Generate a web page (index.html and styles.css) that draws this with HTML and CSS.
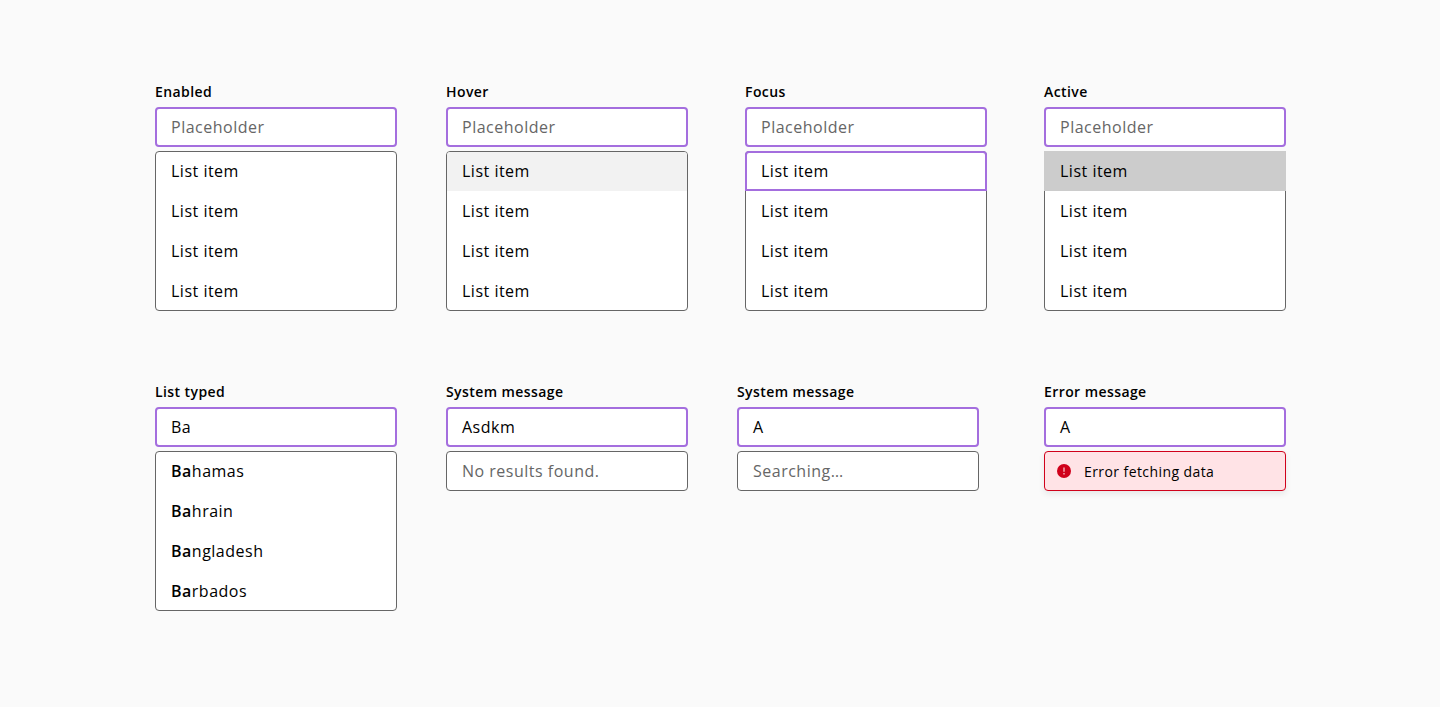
FILE: index.html
```html
<!DOCTYPE html>
<html lang="en">
<head>
<meta charset="utf-8">
<title>Autosuggest states</title>
<link rel="stylesheet" href="styles.css">
</head>
<body>
<main class="board">
<section class="row">
<div class="field"><div class="label">Enabled</div><div class="input placeholder">Placeholder</div><ul class="list"><li>List item</li><li>List item</li><li>List item</li><li>List item</li></ul></div>
<div class="field"><div class="label">Hover</div><div class="input placeholder">Placeholder</div><ul class="list"><li class="hover">List item</li><li>List item</li><li>List item</li><li>List item</li></ul></div>
<div class="field"><div class="label">Focus</div><div class="input placeholder">Placeholder</div><ul class="list"><li class="focus">List item</li><li>List item</li><li>List item</li><li>List item</li></ul></div>
<div class="field"><div class="label">Active</div><div class="input placeholder">Placeholder</div><ul class="list"><li class="active">List item</li><li>List item</li><li>List item</li><li>List item</li></ul></div>
</section>
<section class="row row-messages">
<div class="field"><div class="label">List typed</div><div class="input">Ba</div><ul class="list"><li><b>Ba</b>hamas</li><li><b>Ba</b>hrain</li><li><b>Ba</b>ngladesh</li><li><b>Ba</b>rbados</li></ul></div>
<div class="field"><div class="label">System message</div><div class="input">Asdkm</div><div class="message">No results found.</div></div>
<div class="field"><div class="label">System message</div><div class="input">A</div><div class="message">Searching…</div></div>
<div class="field"><div class="label">Error message</div><div class="input">A</div><div class="error"><svg class="icon" viewBox="0 0 14 14"><circle cx="7" cy="7" r="7" fill="#d0011b"/><path d="M6.3 3.5h1.4v4.2H6.3zM6.3 9.1h1.4v1.4H6.3z" fill="#f7b5bd"/></svg><span class="error-text">Error fetching data</span></div></div>
</section>
</main>
</body>
</html>
```
FILE: styles.css
```css
* { box-sizing: border-box; }
body { margin: 0; background: #fafafa; color: #000; font: 16px/24px "Open Sans", sans-serif; letter-spacing: 0.5px; }
.board { padding: 80px 0 0 155px; height: 707px; }
.row { display: grid; grid-template-columns: 291px 299px 299px 242px; height: 300px; align-items: start; }
.row-messages { grid-template-columns: 291px 291px 307px 242px; }
.field { width: 242px; }
.label { font-size: 14px; font-weight: 600; line-height: 24px; letter-spacing: 0.03em; margin-bottom: 3px; }
.input { height: 40px; border: 2px solid #a46ede; border-radius: 4px; background: #fff; padding: 6px 14px; margin-bottom: 4px; }
.placeholder, .message { color: #666; }
.list { list-style: none; margin: 0; padding: 0; height: 160px; border: 1px solid #666; border-radius: 4px; background: #fff; }
.list li { height: 40px; padding: 7px 15px 9px; }
.list b { font-weight: 600; }
.list .hover { height: 39px; margin-bottom: 1px; background: #f2f2f2; border-radius: 3px 3px 0 0; }
.list .focus { margin: -1px -1px 1px; border: 2px solid #a46ede; border-radius: 4px 4px 0 0; padding: 6px 14px; }
.list .active { margin: -1px -1px 1px; padding: 8px 16px; background: #ccc; }
.message { height: 40px; border: 1px solid #666; border-radius: 4px; background: #fff; padding: 7px 15px; }
.error { display: flex; align-items: center; gap: 13px; height: 40px; border: 1px solid #d0011b; border-radius: 4px; background: #ffe3e6; box-shadow: 0 3px 6px rgba(0, 0, 0, 0.08); padding: 0 12px; font-size: 14px; letter-spacing: 0.03em; }
.error-text { padding-top: 2px; }
.icon { width: 14px; height: 14px; }
```
